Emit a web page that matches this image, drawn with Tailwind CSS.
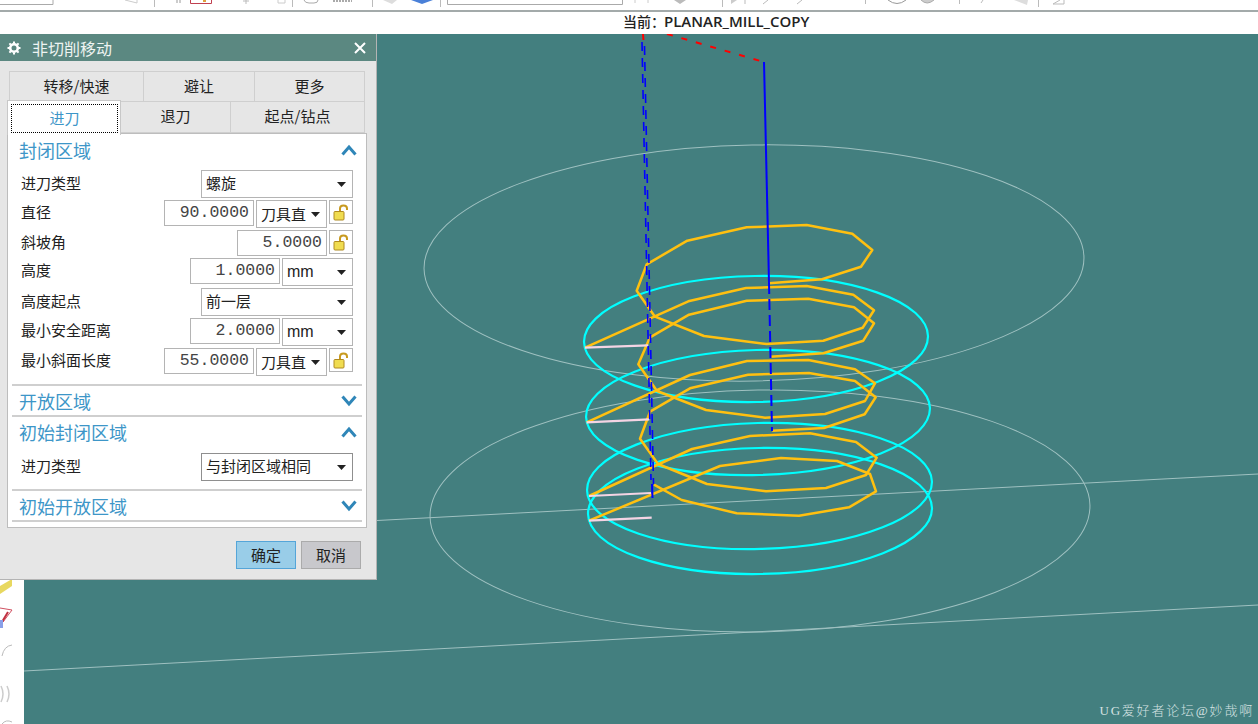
<!DOCTYPE html>
<html lang="zh">
<head>
  <meta charset="UTF-8">
  <title>非切削移动</title>
  <script src="https://cdn.jsdelivr.net/npm/@tailwindcss/browser@4"></script>
</head>
<body class="w-[1258px] h-[724px] overflow-hidden bg-white font-['Noto_Sans_CJK_SC','Noto_Sans',sans-serif] text-[15px] text-[#222]">

  <!-- Toolbar, cut off at the top -->
  <div class="h-[12px] bg-white border-b-2 border-[#a3aaaa]">
    <svg width="1258" height="10" viewBox="0 0 1258 10" fill="none">
      <path d="M-1 4.500H53V-1" stroke="#aaa"/>
      <path d="M154.500 0V7M292.500 0V7M372.500 0V7M440.500 0V7M722.500 0V7M1038.500 0V7" stroke="#bbb"/>
      <path d="M125 0L137 3V0" stroke="#ccc"/>
      <path d="M177 0V3M180 0V3" stroke="#ccc" stroke-width="2"/>
      <path d="M190.500 0V3.500H211.500V0" stroke="#c04050"/>
      <rect x="203" y="0" width="3" height="2" fill="#e0a040"/>
      <path d="M246 0V4M243 1H249" stroke="#bbb"/>
      <path d="M278 0V3H285V0" stroke="#ccc"/>
      <path d="M304 0Q305 3 309 3H314Q318 3 318 0" stroke="#aaa"/>
      <path d="M333 1H352" stroke="#aaa" stroke-width="2" stroke-dasharray="2 1"/>
      <path d="M383 0L392 4L397 0" fill="#ddd"/>
      <path d="M411 0L422 4L433 0Z" fill="#4a80d8"/>
      <path d="M447.500 0V4.500H622.500V0" stroke="#aaa"/>
      <path d="M635 0V3M648 0V3" stroke="#ccc"/>
      <path d="M674 0L680 4L686 0" fill="#bbb"/>
      <path d="M731 0V4L737 0Z" fill="#ccc"/>
      <path d="M745 0V4M763 4L768 0M797 4L802 0" stroke="#bbb"/>
      <path d="M888 0Q897 7 906 0" stroke="#999"/>
      <path d="M921 0Q927 6 934 0" fill="#ccc" stroke="#aaa"/>
      <path d="M865.500 0V4M959.500 0V4M981 3L983 0" stroke="#bbb"/>
      <path d="M1014 0L1027 5L1028 0Z" fill="#ddd"/>
      <path d="M1060 0L1053 4H1064V0" stroke="#bbb"/>
    </svg>
  </div>

  <!-- Current operation -->
  <div class="h-[22px] pl-[623px] leading-[18px] text-[14px] font-medium text-[#222] whitespace-nowrap">当前：<span class="ml-[-1px] font-['Open_Sans'] font-semibold text-[15px]">PLANAR_MILL_COPY</span></div>

  <div class="relative flex h-[690px]">
    <!-- Left resource bar -->
    <div class="w-[24px] h-full bg-white">
      <svg width="24" height="690" viewBox="0 34 24 690" fill="none">
        <path d="M0 586L12 579V586L0 594Z" fill="#e8d860"/>
        <path d="M0 608L12 610L3 622" stroke="#d05060"/>
        <path d="M8 612L2 622" stroke="#c03040" stroke-width="2"/>
        <rect x="0" y="620" width="3" height="8" fill="#8aa0e8"/>
        <path d="M2 656Q4 646 12 645" stroke="#bbb"/>
        <path d="M1 686Q5 694 1 702M7 686Q11 694 7 702" stroke="#ccc" stroke-width="1.500"/>
        <path d="M2 724Q6 719 12 722" stroke="#bbb"/>
      </svg>
    </div>

    <!-- Graphics window -->
    <svg class="block bg-[#437f7f]" width="1234" height="690" viewBox="24 34 1234 690" fill="none">
      <g stroke="#9fc1c1" stroke-width="1">
        <ellipse cx="754" cy="263" rx="330" ry="118" transform="rotate(-1 754 263)"/>
        <ellipse cx="760" cy="511" rx="330" ry="121" transform="rotate(-1 760 511)"/>
        <path d="M24 671L1258 605M377 520.500L1258 474"/>
      </g>
      <g stroke="#00ffff" stroke-width="2.200">
        <ellipse cx="756" cy="339" rx="172" ry="63" transform="rotate(-1 756 339)"/>
        <ellipse cx="758" cy="412.500" rx="172" ry="62.500" transform="rotate(-1.500 758 412)"/>
        <ellipse cx="759.500" cy="486" rx="172.500" ry="63" transform="rotate(-1.500 759 486)"/>
        <ellipse cx="760" cy="511" rx="172" ry="63" transform="rotate(-1 760 511)"/>
      </g>
      <g stroke="#ffc010" stroke-width="2.500" stroke-linejoin="round">
        <path d="M769 283.300L822 279.300L861 266.700L872.300 250L852.300 233.700L806.700 225L746.700 227.300L687.300 240.700L646.700 264.300L636.700 290.700L655 316.700L704 336L766.700 344L823.300 340.700L862.700 327.700L874 310.300L853.300 294.700L806.700 286L746 288L688.300 301.300L585 347.700"/>
        <path d="M770 356.700L823.300 353.300L863.300 340.700L874 323.300L854 307.300L808.300 298.700L746.700 300.700L689 314.700L650 337.300L638.300 364.300L657 391L706 410L765 417.700L825 414L865 401L875 383.300L855 369.300L808.300 360L747 361L690 375L586.700 422.300"/>
        <path d="M772.300 430.700L824 428L864.700 414.300L875.700 397.300L855 381L809 373L748 374.700L690 388.300L650 411.700L640 438.700L658 464L707 484L766 491.300L826 488L866 475L876.700 457.700L856 442L810 433.300L750 436L692 449L589 496"/>
        <path d="M654 484.700L681.700 500L736.700 513.300L799 515.700L849 507.300L876 491.300L870 474L837 461L781 458L720 466L589 520.700"/>
      </g>
      <g stroke="#f4d4e4" stroke-width="2.200">
        <path d="M585 347.700L648.300 345.300M586.700 422.300L649.300 419.300M589 496L651 493M589 520.700L651.700 517.700"/>
      </g>
      <g stroke="#0000ff">
        <path d="M764 62L769 283" stroke-width="2"/>
        <path d="M769 283L772 431" stroke-width="2" stroke-dasharray="11 5"/>
        <path d="M642 42L651 480" stroke-width="1.600" stroke-dasharray="9 7"/>
        <path d="M644.500 46L653.500 484" stroke-width="1.600" stroke-dasharray="9 7"/>
        <path d="M652 484L652.500 498" stroke-width="2"/>
      </g>
      <path d="M643 34L643.500 41M667 34L764 62" stroke="#ff0000" stroke-width="2" stroke-dasharray="6 9"/>
    </svg>

    <div class="absolute right-[4px] bottom-[4px] font-['Liberation_Serif','Noto_Sans_CJK_SC',serif] text-[13px] leading-[18px] tracking-[1.800px] text-[#d5e2e2] font-light">UG爱好者论坛@妙哉啊</div>

    <!-- Dialog -->
    <div class="absolute left-0 top-0 w-[377px] h-[546px] bg-[#e6e6e6] border-r border-b border-[#b4b4b4]">
      <div class="h-[27px] flex items-center bg-[#5b8881] text-white">
        <svg class="ml-[7px]" width="14" height="14" viewBox="0 0 14 14" fill="none">
          <circle cx="7" cy="7" r="3.800" stroke="#fff" stroke-width="2.600"/>
          <path d="M7 0.500V2.500M7 11.500V13.500M0.500 7H2.500M11.500 7H13.500M2.400 2.400L3.800 3.800M10.200 10.200L11.600 11.600M2.400 11.600L3.800 10.200M10.200 3.800L11.600 2.400" stroke="#fff" stroke-width="2"/>
        </svg>
        <span class="ml-[11px] text-[16px] text-[#eef4f2]">非切削移动</span>
        <svg class="ml-auto mr-[10px]" width="12" height="12" viewBox="0 0 12 12"><path d="M1 1L11 11M11 1L1 11" stroke="#fff" stroke-width="2"/></svg>
      </div>

      <!-- Tabs -->
      <div class="relative h-[72px]">
        <div class="absolute left-[9px] top-[10px] flex h-[31px] w-[356px]">
          <div class="w-[135px] border border-[#cfcfcf] text-center leading-[28px]">转移/快速</div>
          <div class="w-[111px] border-y border-r border-[#cfcfcf] text-center leading-[28px]">避让</div>
          <div class="w-[110px] border-y border-r border-[#cfcfcf] text-center leading-[28px]">更多</div>
        </div>
        <div class="absolute left-[121px] top-[41px] flex h-[31px] w-[244px]">
          <div class="w-[110px] border-r border-b border-[#cfcfcf] text-center leading-[28px]">退刀</div>
          <div class="w-[134px] border-r border-b border-[#cfcfcf] text-center leading-[28px]">起点/钻点</div>
        </div>
      </div>

      <!-- Panel -->
      <div class="relative ml-[7px] w-[360px] h-[395px] bg-white border border-[#bdbdbd] text-[#222]">
        <div class="absolute left-[-1px] top-[-34px] w-[114px] h-[35px] bg-white border-x border-t border-[#c8c8c8] p-[3px] z-10">
          <div class="h-[29px] w-[107px] border border-dotted border-black text-center leading-[25px] text-[#3d96c8]">进刀</div>
        </div>

        <div class="h-[36px] pl-[11px] pr-[9px] flex items-start justify-between">
          <span class="text-[18px] leading-[32px] text-[#3d96c8]">封闭区域</span>
          <svg class="mt-[10px]" width="16" height="12" viewBox="0 0 16 12"><path d="M1.500 10.500L8 3L14.500 10.500" stroke="#2f86b8" stroke-width="3" fill="none"/></svg>
        </div>

        <!-- Rows -->
        <div class="pl-[13px] pr-[13px]">
          <div class="h-[30px] flex items-start">
            <span class="mr-auto leading-[26px]">进刀类型</span>
            <div class="w-[152px] h-[28px] border border-[#b4b4b4] flex items-center pl-[4px] pr-[6px]"><span class="leading-[24px] mb-[2px]">螺旋</span><svg class="ml-auto" width="9" height="5" viewBox="0 0 9 5"><path d="M0 0H9L4.500 5Z" fill="#222"/></svg></div>
          </div>
          <div class="h-[30px] flex items-start">
            <span class="mr-auto leading-[24px]">直径</span>
            <div class="w-[90px] h-[26px] border border-[#b4b4b4] text-right pr-[4px] font-['Liberation_Mono'] text-[16.500px] leading-[24px] text-[#444]">90.0000</div>
            <div class="ml-[2px] w-[71px] h-[28px] border border-[#b4b4b4] flex items-center pl-[4px] pr-[6px]"><span class="leading-[24px] whitespace-nowrap">刀具直</span><svg class="ml-auto" width="9" height="5" viewBox="0 0 9 5"><path d="M0 0H9L4.500 5Z" fill="#222"/></svg></div>
            <div class="ml-[2px] w-[24px] h-[24px] border border-[#b4b4b4] flex items-center justify-center">
              <svg width="16" height="17" viewBox="0 0 16 17"><path d="M7 8V4.500Q7 1.500 10.500 1.500Q14 1.500 14 4.500V6" fill="none" stroke="#c89a20" stroke-width="2"/><rect x="1" y="7.500" width="10" height="8.500" rx="1" fill="#f0dc50" stroke="#b08a20"/></svg>
            </div>
          </div>
          <div class="h-[28px] flex items-start">
            <span class="mr-auto leading-[24px]">斜坡角</span>
            <div class="w-[90px] h-[26px] border border-[#b4b4b4] text-right pr-[4px] font-['Liberation_Mono'] text-[16.500px] leading-[24px] text-[#444]">5.0000</div>
            <div class="ml-[2px] w-[24px] h-[24px] border border-[#b4b4b4] flex items-center justify-center">
              <svg width="16" height="17" viewBox="0 0 16 17"><path d="M7 8V4.500Q7 1.500 10.500 1.500Q14 1.500 14 4.500V6" fill="none" stroke="#c89a20" stroke-width="2"/><rect x="1" y="7.500" width="10" height="8.500" rx="1" fill="#f0dc50" stroke="#b08a20"/></svg>
            </div>
          </div>
          <div class="h-[30px] flex items-start">
            <span class="mr-auto leading-[24px]">高度</span>
            <div class="w-[90px] h-[26px] border border-[#b4b4b4] text-right pr-[4px] font-['Liberation_Mono'] text-[16.500px] leading-[24px] text-[#444]">1.0000</div>
            <div class="ml-[2px] w-[71px] h-[28px] border border-[#b4b4b4] flex items-center pl-[4px] pr-[6px]"><span class="font-['Liberation_Sans'] text-[16px]">mm</span><svg class="ml-auto" width="9" height="5" viewBox="0 0 9 5"><path d="M0 0H9L4.500 5Z" fill="#222"/></svg></div>
          </div>
          <div class="h-[30px] flex items-start">
            <span class="mr-auto leading-[26px]">高度起点</span>
            <div class="w-[152px] h-[28px] border border-[#b4b4b4] flex items-center pl-[4px] pr-[6px]"><span class="leading-[24px] mb-[2px]">前一层</span><svg class="ml-auto" width="9" height="5" viewBox="0 0 9 5"><path d="M0 0H9L4.500 5Z" fill="#222"/></svg></div>
          </div>
          <div class="h-[30px] flex items-start">
            <span class="mr-auto leading-[24px]">最小安全距离</span>
            <div class="w-[90px] h-[26px] border border-[#b4b4b4] text-right pr-[4px] font-['Liberation_Mono'] text-[16.500px] leading-[24px] text-[#444]">2.0000</div>
            <div class="ml-[2px] w-[71px] h-[28px] border border-[#b4b4b4] flex items-center pl-[4px] pr-[6px]"><span class="font-['Liberation_Sans'] text-[16px]">mm</span><svg class="ml-auto" width="9" height="5" viewBox="0 0 9 5"><path d="M0 0H9L4.500 5Z" fill="#222"/></svg></div>
          </div>
          <div class="h-[30px] flex items-start">
            <span class="mr-auto leading-[24px]">最小斜面长度</span>
            <div class="w-[90px] h-[26px] border border-[#b4b4b4] text-right pr-[4px] font-['Liberation_Mono'] text-[16.500px] leading-[24px] text-[#444]">55.0000</div>
            <div class="ml-[2px] w-[71px] h-[28px] border border-[#b4b4b4] flex items-center pl-[4px] pr-[6px]"><span class="leading-[24px] whitespace-nowrap">刀具直</span><svg class="ml-auto" width="9" height="5" viewBox="0 0 9 5"><path d="M0 0H9L4.500 5Z" fill="#222"/></svg></div>
            <div class="ml-[2px] w-[24px] h-[24px] border border-[#b4b4b4] flex items-center justify-center">
              <svg width="16" height="17" viewBox="0 0 16 17"><path d="M7 8V4.500Q7 1.500 10.500 1.500Q14 1.500 14 4.500V6" fill="none" stroke="#c89a20" stroke-width="2"/><rect x="1" y="7.500" width="10" height="8.500" rx="1" fill="#f0dc50" stroke="#b08a20"/></svg>
            </div>
          </div>
        </div>

        <div class="mt-[6px] mx-[4px] h-[2px] bg-[#cfcfcf]"></div>
        <div class="h-[29px] pl-[11px] pr-[9px] flex items-start justify-between">
          <span class="text-[18px] leading-[30px] text-[#3d96c8]">开放区域</span>
          <svg class="mt-[9px]" width="16" height="12" viewBox="0 0 16 12"><path d="M1.500 1.500L8 9L14.500 1.500" stroke="#2f86b8" stroke-width="3" fill="none"/></svg>
        </div>
        <div class="mx-[4px] h-[2px] bg-[#cfcfcf]"></div>
        <div class="h-[36px] pl-[11px] pr-[9px] flex items-start justify-between">
          <span class="text-[18px] leading-[30px] text-[#3d96c8]">初始封闭区域</span>
          <svg class="mt-[9px]" width="16" height="12" viewBox="0 0 16 12"><path d="M1.500 10.500L8 3L14.500 10.500" stroke="#2f86b8" stroke-width="3" fill="none"/></svg>
        </div>
        <div class="pl-[13px] pr-[13px] h-[36px] flex items-start">
          <span class="mr-auto leading-[26px]">进刀类型</span>
          <div class="w-[152px] h-[28px] border border-[#8f8f8f] flex items-center pl-[4px] pr-[6px]"><span class="leading-[24px] mb-[2px]">与封闭区域相同</span><svg class="ml-auto" width="9" height="5" viewBox="0 0 9 5"><path d="M0 0H9L4.500 5Z" fill="#222"/></svg></div>
        </div>
        <div class="mx-[4px] h-[2px] bg-[#cfcfcf]"></div>
        <div class="h-[29px] pl-[11px] pr-[9px] flex items-start justify-between">
          <span class="text-[18px] leading-[30px] text-[#3d96c8]">初始开放区域</span>
          <svg class="mt-[9px]" width="16" height="12" viewBox="0 0 16 12"><path d="M1.500 1.500L8 9L14.500 1.500" stroke="#2f86b8" stroke-width="3" fill="none"/></svg>
        </div>
        <div class="mx-[4px] h-[2px] bg-[#cfcfcf]"></div>
      </div>

      <!-- Buttons -->
      <div class="mt-[13px] ml-[236px] flex gap-[5px]">
        <div class="w-[60px] h-[28px] bg-[#99cde8] border border-[#55a5d8] text-center leading-[25px]">确定</div>
        <div class="w-[60px] h-[28px] bg-[#c8c8cc] border border-[#ababab] text-center leading-[25px]">取消</div>
      </div>
    </div>
  </div>
</body>
</html>
